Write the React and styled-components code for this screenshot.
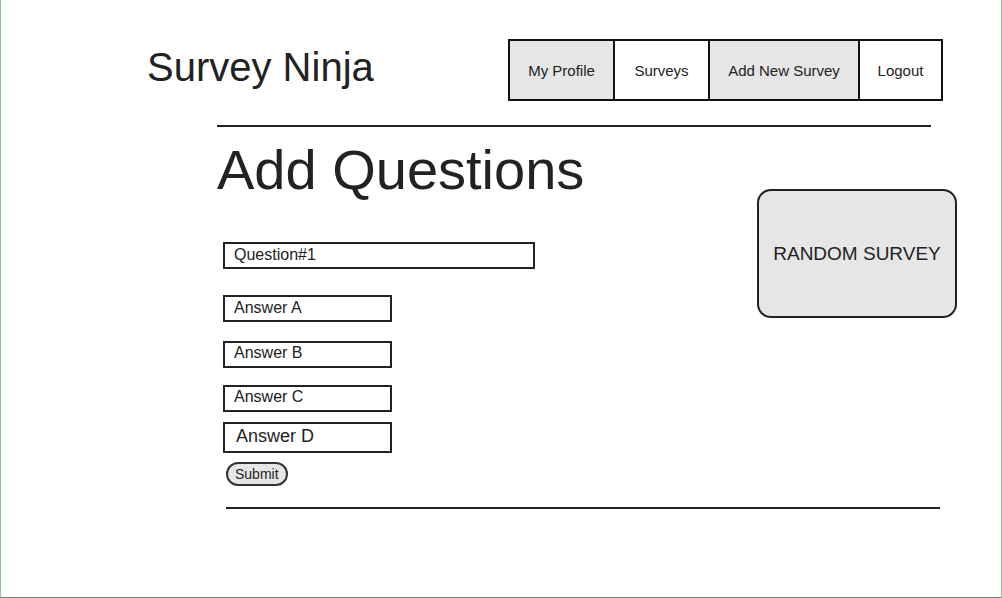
import React from "react";
import styled, { createGlobalStyle } from "styled-components";

const GlobalStyle = createGlobalStyle`
  html, body { margin: 0; padding: 0; background: #ffffff; }
  body { font-family: "Liberation Sans", Arial, sans-serif; color: #222222; }
  * { box-sizing: border-box; }
`;

const Frame = styled.div`
  width: 1002px;
  height: 598px;
  border-left: 1px solid #8fc18f;
  border-right: 1px solid #8fc18f;
  border-bottom: 1px solid #6f806f;
  display: flex;
  flex-direction: column;
  overflow: hidden;
`;

const Header = styled.header`
  display: flex;
  align-items: flex-start;
  padding: 39px 58px 0 146px;
`;

const Title = styled.h1`
  margin: 5px 0 0;
  font-size: 40px;
  line-height: 46px;
  font-weight: 400;
  color: #222222;
`;

const Nav = styled.nav`
  margin-left: auto;
  display: flex;
  height: 62px;
  border: 2px solid #111111;
`;

const NavItem = styled.a`
  display: flex;
  align-items: center;
  justify-content: center;
  flex: 0 0 auto;
  width: ${(p) => p.$w}px;
  font-size: 15px;
  color: #222222;
  text-decoration: none;
  background: ${(p) => (p.$shaded ? "#e6e6e6" : "#ffffff")};
  & + & { border-left: 2px solid #111111; }
`;

const Rule = styled.hr`
  border: 0;
  height: 2px;
  background: #222222;
  margin: ${(p) => p.$m};
`;

const Body = styled.main`
  display: flex;
  align-items: flex-start;
  padding-left: 216px;
`;

const LeftCol = styled.section`
  display: flex;
  flex-direction: column;
  align-items: flex-start;
`;

const Heading = styled.h2`
  margin: 11px 0 0;
  font-size: 56px;
  line-height: 64px;
  font-weight: 400;
  color: #222222;
`;

const Form = styled.form`
  display: flex;
  flex-direction: column;
  align-items: flex-start;
  margin: 40px 0 0 6px;
`;

const Field = styled.div`
  width: ${(p) => p.$w}px;
  height: ${(p) => p.$h}px;
  margin-top: ${(p) => p.$mt}px;
  border: 2px solid #222222;
  padding: ${(p) => p.$pad};
  font-size: ${(p) => p.$fs}px;
  line-height: 20px;
  color: #222222;
  background: #ffffff;
`;

const Submit = styled.button`
  margin: 9px 0 0 3px;
  height: 24px;
  padding: 0 7px;
  border: 2px solid #333333;
  border-radius: 12px;
  background: #e6e6e6;
  font-family: "Liberation Sans", Arial, sans-serif;
  font-size: 14px;
  color: #222222;
  line-height: 18px;
`;

const RandomBox = styled.div`
  margin: 62px 44px 0 auto;
  width: 200px;
  height: 129px;
  border: 2px solid #222222;
  border-radius: 14px;
  background: #e6e6e6;
  display: flex;
  align-items: center;
  justify-content: center;
  font-size: 19px;
  color: #222222;
`;

const navItems = [
  { label: "My Profile", w: 103, shaded: true },
  { label: "Surveys", w: 95, shaded: false },
  { label: "Add New Survey", w: 150, shaded: true },
  { label: "Logout", w: 83, shaded: false },
];

const fields = [
  { label: "Question#1", w: 312, h: 27, mt: 0, fs: 16, pad: "1px 9px 0" },
  { label: "Answer A", w: 169, h: 27, mt: 26, fs: 16, pad: "1px 9px 0" },
  { label: "Answer B", w: 169, h: 27, mt: 19, fs: 16, pad: "0 9px 0" },
  { label: "Answer C", w: 169, h: 27, mt: 17, fs: 16, pad: "0 9px 0" },
  { label: "Answer D", w: 169, h: 31, mt: 10, fs: 18, pad: "2px 11px 0" },
];

export default function App() {
  return (
    <>
      <GlobalStyle />
      <Frame>
        <Header>
          <Title>Survey Ninja</Title>
          <Nav>
            {navItems.map((n) => (
              <NavItem key={n.label} $w={n.w} $shaded={n.shaded}>
                {n.label}
              </NavItem>
            ))}
          </Nav>
        </Header>
        <Rule $m="24px 70px 0 216px" />
        <Body>
          <LeftCol>
            <Heading>Add Questions</Heading>
            <Form onSubmit={(e) => e.preventDefault()}>
              {fields.map((f) => (
                <Field key={f.label} $w={f.w} $h={f.h} $mt={f.mt} $fs={f.fs} $pad={f.pad}>
                  {f.label}
                </Field>
              ))}
              <Submit type="submit">Submit</Submit>
            </Form>
          </LeftCol>
          <RandomBox>RANDOM SURVEY</RandomBox>
        </Body>
        <Rule $m="21px 61px 0 225px" />
      </Frame>
    </>
  );
}
